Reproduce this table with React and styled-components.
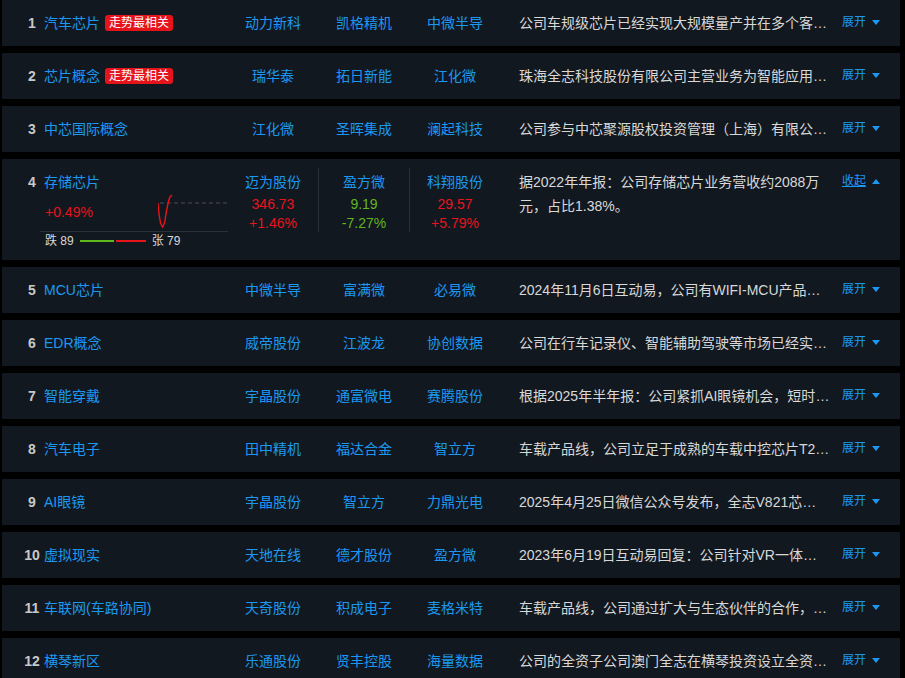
import React from "react";
import styled, { createGlobalStyle, css } from "styled-components";

const GlobalStyle = createGlobalStyle`
  body {
    margin: 0;
    background: #000;
    font-family: "Liberation Sans", "Noto Sans CJK SC", sans-serif;
    overflow: hidden;
  }
`;

const rows = [
  {
    name: "汽车芯片",
    hot: true,
    stocks: ["动力新科", "凯格精机", "中微半导"],
    desc: "公司车规级芯片已经实现大规模量产并在多个客户项目中得到应用",
  },
  {
    name: "芯片概念",
    hot: true,
    stocks: ["瑞华泰", "拓日新能", "江化微"],
    desc: "珠海全志科技股份有限公司主营业务为智能应用处理器SoC的研发与设计",
  },
  {
    name: "中芯国际概念",
    stocks: ["江化微", "圣晖集成", "澜起科技"],
    desc: "公司参与中芯聚源股权投资管理（上海）有限公司发起设立的基金",
  },
  {
    name: "存储芯片",
    expanded: true,
    change: "+0.49%",
    fall: 89,
    rise: 79,
    stocks: [
      { name: "迈为股份", price: "346.73", pct: "+1.46%", up: true },
      { name: "盈方微", price: "9.19", pct: "-7.27%", up: false },
      { name: "科翔股份", price: "29.57", pct: "+5.79%", up: true },
    ],
    desc: "据2022年年报：公司存储芯片业务营收约2088万元，占比1.38%。",
  },
  {
    name: "MCU芯片",
    stocks: ["中微半导", "富满微", "必易微"],
    desc: "2024年11月6日互动易，公司有WIFI-MCU产品及相关解决方案",
  },
  {
    name: "EDR概念",
    stocks: ["威帝股份", "江波龙", "协创数据"],
    desc: "公司在行车记录仪、智能辅助驾驶等市场已经实现量产出货",
  },
  {
    name: "智能穿戴",
    stocks: ["宇晶股份", "通富微电", "赛腾股份"],
    desc: "根据2025年半年报：公司紧抓AI眼镜机会，短时间内推出多款方案",
  },
  {
    name: "汽车电子",
    stocks: ["田中精机", "福达合金", "智立方"],
    desc: "车载产品线，公司立足于成熟的车载中控芯片T2系列产品",
  },
  {
    name: "AI眼镜",
    stocks: ["宇晶股份", "智立方", "力鼎光电"],
    desc: "2025年4月25日微信公众号发布，全志V821芯片助力AI眼镜",
  },
  {
    name: "虚拟现实",
    stocks: ["天地在线", "德才股份", "盈方微"],
    desc: "2023年6月19日互动易回复：公司针对VR一体机推出相关芯片",
  },
  {
    name: "车联网(车路协同)",
    stocks: ["天奇股份", "积成电子", "麦格米特"],
    desc: "车载产品线，公司通过扩大与生态伙伴的合作，持续推出新品",
  },
  {
    name: "横琴新区",
    stocks: ["乐通股份", "贤丰控股", "海量数据"],
    desc: "公司的全资子公司澳门全志在横琴投资设立全资子公司",
  },
];

const MiniChart = () => (
  <svg width="70" height="40" viewBox="0 0 70 40">
    <line x1="2" y1="11" x2="70" y2="11" stroke="#4a4f55" strokeDasharray="4 3" />
    <polyline
      points="0,11 1,22 2.5,31 4.5,35 6.5,31 8.5,19 10.5,9 12,5 14,3"
      fill="none"
      stroke="#e8141c"
      strokeWidth="1.4"
    />
  </svg>
);

const App = () => {
  return (
    <>
      <GlobalStyle />
      <List>
        {rows.map((row, i) => (
          <Card key={i} $expanded={row.expanded}>
            <Index>{i + 1}</Index>
            <NameCell>
              <Name>{row.name}</Name>
              {row.hot && <Badge>走势最相关</Badge>}
              {row.expanded && (
                <>
                  <Quote>
                    <Change>{row.change}</Change>
                    <MiniChart />
                  </Quote>
                  <Breadth>
                    <span>跌 {row.fall}</span>
                    <Bar $color="#5fb81c" $w={34} />
                    <Bar $color="#e8141c" $w={30} />
                    <span>张 {row.rise}</span>
                  </Breadth>
                </>
              )}
            </NameCell>
            {row.stocks.map((s, j) =>
              row.expanded ? (
                <StockCell key={j} $expanded $divider={j > 0}>
                  <StockName>{s.name}</StockName>
                  <Price $up={s.up}>{s.price}</Price>
                  <Pct $up={s.up}>{s.pct}</Pct>
                </StockCell>
              ) : (
                <StockCell key={j}>
                  <StockName>{s}</StockName>
                </StockCell>
              )
            )}
            <Desc $expanded={row.expanded}>{row.desc}</Desc>
            <Toggle $expanded={row.expanded}>
              <span>{row.expanded ? "收起" : "展开"}</span>
              <Arrow $up={row.expanded} />
            </Toggle>
          </Card>
        ))}
      </List>
    </>
  );
};

export default App;

const blue = "#1c98f2";
const red = "#e8141c";
const green = "#62b51e";

const List = styled.div`
  display: flex;
  flex-direction: column;
  gap: 7px;
  margin: 0 5px 0 2px;
`;

const Card = styled.div`
  display: grid;
  grid-template-columns: 24px 183px 91px 91px 91px 342px 1fr;
  align-items: start;
  padding-left: 18px;
  min-height: ${(p) => (p.$expanded ? "101px" : "46px")};
  box-sizing: border-box;
  background: #121820;
`;

const Index = styled.div`
  padding-top: 13px;
  line-height: 20px;
  font-size: 14px;
  font-weight: bold;
  color: #c8c8c8;
  text-align: center;
`;

const NameCell = styled.div`
  padding-top: 13px;
  line-height: 20px;
  font-size: 14px;
  white-space: nowrap;
`;

const Name = styled.span`
  color: ${blue};
`;

const Badge = styled.span`
  display: inline-block;
  margin-left: 5px;
  padding: 0 4px;
  border-radius: 3px;
  background: #e5131b;
  color: #fff;
  font-size: 12px;
  line-height: 16px;
  vertical-align: 1px;
`;

const Quote = styled.div`
  display: flex;
  align-items: center;
  justify-content: space-between;
  height: 40px;
  margin-left: -4px;
  width: 188px;
  padding-left: 5px;
  box-sizing: border-box;
  border-bottom: 1px solid #2a3038;
`;

const Change = styled.span`
  color: ${red};
  font-size: 14px;
`;

const Breadth = styled.div`
  display: flex;
  align-items: center;
  height: 18px;
  margin-left: 1px;
  font-size: 12px;
  color: #d8d8d8;
  span:first-child {
    margin-right: 6px;
  }
  span:last-child {
    margin-left: 4px;
  }
`;

const Bar = styled.i`
  display: block;
  width: ${(p) => p.$w}px;
  height: 2px;
  margin-right: 2px;
  background: ${(p) => p.$color};
`;

const StockCell = styled.div`
  padding-top: 13px;
  line-height: 20px;
  font-size: 14px;
  text-align: center;
  ${(p) =>
    p.$expanded &&
    css`
      margin-top: 9px;
      padding-top: 4px;
    `}
  border-left: 1px solid ${(p) => (p.$divider ? "#2a3038" : "transparent")};
`;

const StockName = styled.div`
  color: ${blue};
`;

const Price = styled.div`
  margin-top: 2px;
  color: ${(p) => (p.$up ? red : green)};
`;

const Pct = styled.div`
  line-height: 18px;
  color: ${(p) => (p.$up ? red : green)};
`;

const Desc = styled.div`
  min-width: 0;
  padding: ${(p) => (p.$expanded ? "11px" : "13px")} 12px 0 19px;
  font-size: 14px;
  color: #d8d8d8;
  line-height: ${(p) => (p.$expanded ? "24px" : "20px")};
  ${(p) =>
    !p.$expanded &&
    css`
      white-space: nowrap;
      overflow: hidden;
      text-overflow: ellipsis;
    `}
`;

const Toggle = styled.div`
  display: flex;
  align-items: center;
  padding-top: 12px;
  line-height: 20px;
  font-size: 12px;
  color: ${blue};
  cursor: pointer;
  span {
    text-decoration: ${(p) => (p.$expanded ? "underline" : "none")};
  }
`;

const Arrow = styled.i`
  display: block;
  width: 0;
  height: 0;
  margin-left: 6px;
  border-left: 4px solid transparent;
  border-right: 4px solid transparent;
  ${(p) =>
    p.$up
      ? css`
          border-bottom: 5px solid ${blue};
        `
      : css`
          border-top: 5px solid ${blue};
        `}
`;
